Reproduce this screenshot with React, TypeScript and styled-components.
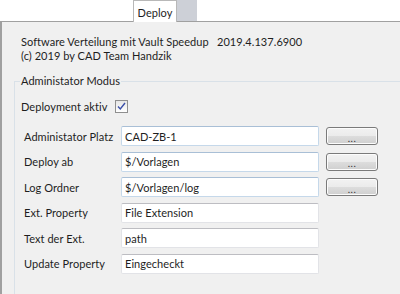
import * as React from 'react';
import styled, { createGlobalStyle } from 'styled-components';

const GlobalStyle = createGlobalStyle`
  html, body {
    margin: 0;
    padding: 0;
    background: #ffffff;
  }
  body {
    font-family: Lato, 'Open Sans', sans-serif;
    font-size: 11px;
    letter-spacing: 0.05px;
    color: #1e1e1e;
    white-space: nowrap;
  }
`;

interface Field {
  label: string;
  value: string;
  browse?: boolean;
  active?: boolean;
}

const fields: Field[] = [
  { label: 'Administator Platz', value: 'CAD-ZB-1', browse: true, active: true },
  { label: 'Deploy ab', value: '$/Vorlagen', browse: true, active: true },
  { label: 'Log Ordner', value: '$/Vorlagen/log', browse: true, active: true },
  { label: 'Ext. Property', value: 'File Extension' },
  { label: 'Text der Ext.', value: 'path' },
  { label: 'Update Property', value: 'Eingecheckt' }
];

const Window = styled.div`
  width: 400px;
  height: 294px;
  overflow: hidden;
  display: flex;
  flex-direction: column;
`;

const TabStrip = styled.div`
  height: 22px;
  display: flex;
  align-items: flex-end;
  padding-left: 133px;
  background: #ffffff;
  position: relative;
  z-index: 1;
`;

const Tab = styled.div<{ $selected?: boolean }>`
  box-sizing: border-box;
  height: ${p => (p.$selected ? '22px' : '21px')};
  width: ${p => (p.$selected ? '44px' : '20px')};
  margin-bottom: ${p => (p.$selected ? '-1px' : '0')};
  background: ${p => (p.$selected ? '#ffffff' : '#cdd0d7')};
  border: 1px solid ${p => (p.$selected ? '#b8b8b8' : '#cdd0d7')};
  border-bottom: none;
  display: flex;
  align-items: center;
  justify-content: center;
  padding-top: 1px;
  color: #1e1e1e;
`;

const Panel = styled.div`
  flex: 1;
  background: #f0f0f0;
  border-top: 1px solid #a0a0a0;
  border-left: 2px solid #a0a0a0;
  padding-top: 13px;
`;

const Info = styled.div`
  display: grid;
  grid-template-columns: 196px auto;
  line-height: 14px;
  padding-left: 19px;
`;

const GroupBox = styled.fieldset`
  margin: 11px 0 0 12px;
  padding: 0 0 0 5px;
  border: 1px solid #d9e1e8;
  border-right: none;
  border-bottom: none;
  height: 300px;
`;

const Legend = styled.legend`
  padding: 0 1px;
  line-height: 14px;
`;

const CheckRow = styled.div`
  display: flex;
  align-items: center;
  margin-top: 11px;
  padding-left: 1px;
  height: 14px;
`;

const CheckLabel = styled.span`
  width: 94px;
`;

const CheckBox = styled.span`
  box-sizing: border-box;
  width: 13px;
  height: 13px;
  border: 1px solid #8f8f8f;
  background: linear-gradient(#e6e6e6, #ffffff);
  display: flex;
  align-items: center;
  justify-content: center;
`;

const Rows = styled.div`
  margin-top: 13px;
  display: flex;
  flex-direction: column;
  gap: 5.6px;
  padding-left: 4px;
`;

const Row = styled.div`
  display: flex;
  align-items: center;
  height: 20px;
`;

const Label = styled.span`
  width: 97px;
  flex: none;
`;

const TextBox = styled.div<{ $active?: boolean }>`
  box-sizing: border-box;
  width: 198px;
  height: 20px;
  background: #ffffff;
  border: 1px solid ${p => (p.$active ? '#c5d8ea' : '#e2e3e7')};
  border-top-color: ${p => (p.$active ? '#a9bfd6' : '#bdbdc2')};
  border-radius: 2px;
  padding-left: 3px;
  display: flex;
  align-items: center;
  flex: none;
`;

const BrowseButton = styled.div`
  box-sizing: border-box;
  margin-left: 7px;
  width: 52px;
  height: 18px;
  border: 1px solid #7a7a7a;
  border-radius: 3px;
  background: linear-gradient(#f2f2f2 0%, #ebebeb 50%, #dddddd 50%, #cfcfcf 100%);
  box-shadow: inset 0 0 0 1px #fcfcfc;
  display: flex;
  align-items: center;
  justify-content: center;
  font-size: 10px;
  line-height: 10px;
  letter-spacing: 0.5px;
  color: #333333;
  padding-top: 3px;
`;

const Check = () => (
  <svg width="9" height="9" viewBox="0 0 9 9">
    <path d="M1 4.5 L3.3 7 L8 1" fill="none" stroke="#3b4fa8" strokeWidth="1.4" />
  </svg>
);

export default function App() {
  return (
    <Window>
      <GlobalStyle />
      <TabStrip>
        <Tab $selected>Deploy</Tab>
        <Tab />
      </TabStrip>
      <Panel>
        <Info>
          <span>Software Verteilung mit Vault Speedup</span>
          <span>2019.4.137.6900</span>
          <span>(c) 2019 by CAD Team Handzik</span>
        </Info>
        <GroupBox>
          <Legend>Administator Modus</Legend>
          <CheckRow>
            <CheckLabel>Deployment aktiv</CheckLabel>
            <CheckBox>
              <Check />
            </CheckBox>
          </CheckRow>
          <Rows>
            {fields.map(f => (
              <Row key={f.label}>
                <Label>{f.label}</Label>
                <TextBox $active={f.active}>{f.value}</TextBox>
                {f.browse && <BrowseButton>...</BrowseButton>}
              </Row>
            ))}
          </Rows>
        </GroupBox>
      </Panel>
    </Window>
  );
}
